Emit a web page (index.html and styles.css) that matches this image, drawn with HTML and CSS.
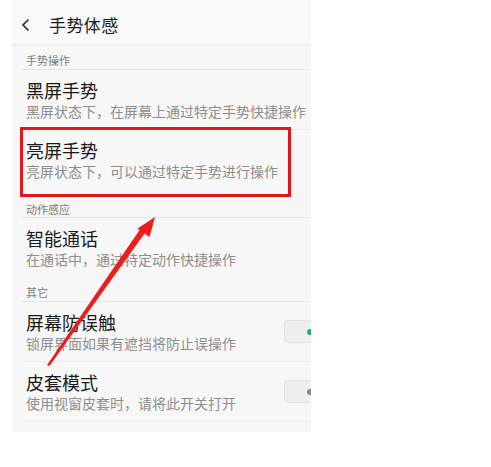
FILE: index.html
```html
<!DOCTYPE html>
<html lang="zh">
<head>
<meta charset="utf-8">
<link rel="stylesheet" href="styles.css">
</head>
<body>
<div class="page">
  <div class="phone">
    <div class="topbar">
      <svg class="back" width="10" height="14" viewBox="0 0 10 14"><polyline points="7.5,1.5 2,7 7.5,12.5" fill="none" stroke="#333" stroke-width="1.7"/></svg>
      <span class="topbar-title">手势体感</span>
    </div>
    <div class="list">
      <div class="section">手势操作</div>
      <div class="item divided">
        <div class="item-text">
          <div class="item-title">黑屏手势</div>
          <div class="item-sub">黑屏状态下，在屏幕上通过特定手势快捷操作</div>
        </div>
      </div>
      <div class="item">
        <div class="item-text">
          <div class="item-title">亮屏手势</div>
          <div class="item-sub">亮屏状态下，可以通过特定手势进行操作</div>
        </div>
      </div>
      <div class="section section-tall">动作感应</div>
      <div class="item">
        <div class="item-text">
          <div class="item-title">智能通话</div>
          <div class="item-sub">在通话中，通过特定动作快捷操作</div>
        </div>
      </div>
      <div class="section">其它</div>
      <div class="item divided">
        <div class="item-text">
          <div class="item-title">屏幕防误触</div>
          <div class="item-sub">锁屏界面如果有遮挡将防止误操作</div>
        </div>
        <div class="switch"><span class="dot on"></span></div>
      </div>
      <div class="item divided">
        <div class="item-text">
          <div class="item-title">皮套模式</div>
          <div class="item-sub">使用视窗皮套时，请将此开关打开</div>
        </div>
        <div class="switch"><span class="dot"></span></div>
      </div>
    </div>
  </div>
  <div class="highlight"></div>
  <svg class="arrow" width="491" height="467" viewBox="0 0 491 467">
    <polygon points="47,365 49.5,366 146,231.5 141,228" fill="#ef1c1c"/>
    <polygon points="155,217 137.5,228.5 149.5,237" fill="#ef1c1c"/>
  </svg>
</div>
</body>
</html>
```

FILE: styles.css
```css
* { box-sizing: border-box; }
html, body { margin: 0; padding: 0; background: #ffffff; }
body {
  font-family: "Noto Sans CJK SC", "Noto Sans", sans-serif;
  width: 491px;
  height: 467px;
  overflow: hidden;
}
.page { position: relative; width: 491px; height: 467px; }
.phone {
  margin-left: 12px;
  width: 299px;
  height: 432px;
  background: #f7f7f7;
  overflow: hidden;
}
.topbar {
  height: 46px;
  background: #f9f9f9;
  border-bottom: 2px solid #efefef;
  display: flex;
  align-items: center;
  padding: 5px 0 0 9px;
}
.back { margin-right: 18px; }
.topbar-title {
  font-size: 17px;
  color: #1c1c1c;
  letter-spacing: 0.4px;
}
.list { display: flex; flex-direction: column; }
.section {
  height: 24px;
  margin-left: 10px;
  padding: 7px 0 0 4px;
  font-size: 11px;
  line-height: 14px;
  color: #7c7c7c;
  border-bottom: 1px solid #e6e6e6;
}
.section-tall { height: 28px; padding-top: 12px; }
.item {
  height: 60px;
  display: flex;
  align-items: center;
  padding-left: 14px;
}
.item.divided { border-bottom: 1px solid #ededed; margin-left: 10px; padding-left: 4px; }
.item-text { flex: 1; display: flex; flex-direction: column; }
.item-title {
  font-size: 18px;
  line-height: 22px;
  color: #1a1a1a;
}
.item-sub {
  font-size: 14px;
  line-height: 20px;
  color: #8e8e8e;
  white-space: nowrap;
}
.switch {
  flex: none;
  width: 44px;
  height: 23px;
  margin-right: -17px;
  background: #efefef;
  border: 1px solid #e2e2e2;
  border-radius: 4px;
  display: flex;
  align-items: center;
  padding-left: 22px;
}
.dot { width: 6px; height: 6px; border-radius: 50%; background: #8a8a8a; }
.dot.on { background: #1fb36e; }
.highlight {
  position: absolute;
  left: 20px;
  top: 127px;
  width: 271px;
  height: 70px;
  border: 3px solid #e3161e;
}
.arrow { position: absolute; left: 0; top: 0; pointer-events: none; }
```
